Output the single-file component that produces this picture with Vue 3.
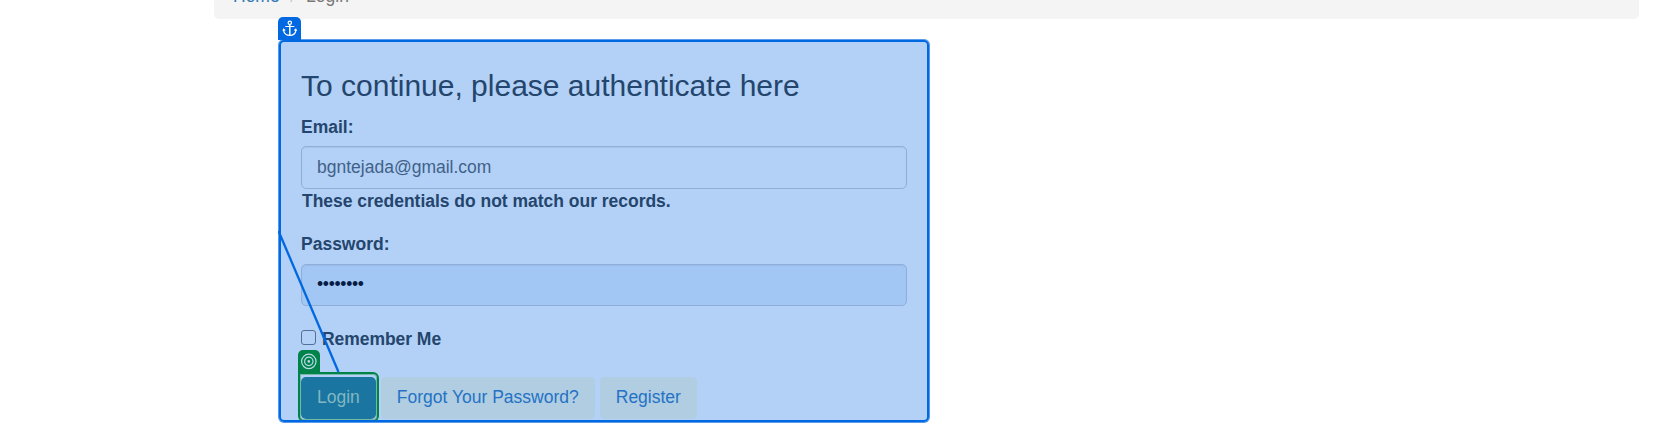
<script setup>
const links = ['Forgot Your Password?', 'Register']
const password = '•'.repeat(8)
</script>

<template>
  <main class="page">
    <nav class="breadcrumb"><a class="home">Home</a><span class="slash">/</span><span>Login</span></nav>
    <section class="panel">
      <h1>To continue, please authenticate here</h1>
      <label class="line">Email:</label>
      <div class="field email">bgntejada@gmail.com</div>
      <strong class="line error">These credentials do not match our records.</strong>
      <label class="line password-label">Password:</label>
      <div class="field password">{{ password }}</div>
      <label class="remember"><span class="checkbox"></span><span>Remember Me</span></label>
      <div class="actions">
        <button class="btn primary">Login</button>
        <button v-for="link in links" :key="link" class="btn">{{ link }}</button>
      </div>
    </section>

    <div class="target-outline"></div>
    <div class="panel-outline"></div>
    <div class="tag anchor-tag">
      <svg width="23" height="23" viewBox="0 0 23 23" fill="none" stroke="#fff" stroke-width="1.2">
        <circle cx="11.8" cy="5.8" r="1.7" />
        <path stroke-width="1.5" d="M11.8 7.5V18" />
        <path d="M7.300 9.500h9M5.500 12.200v1.200c.6 3 3.200 5 6.300 5s5.700-2 6.200-5v-1.200M5 14l.7-1.800 1.500 1.300M18.500 14l-.7-1.800-1.500 1.300" />
      </svg>
    </div>
    <div class="tag target-tag">
      <svg width="22" height="23" viewBox="0 0 22 23" fill="none" stroke="#b9d9ed" stroke-width="1.200">
        <circle cx="10.800" cy="11.400" r="7.200" />
        <circle cx="10.800" cy="11.400" r="4.200" />
        <circle cx="10.800" cy="11.400" r="1.300" fill="#b9d9ed" stroke="none" />
      </svg>
    </div>
    <svg class="connector" width="64" height="144" viewBox="0 0 64 144">
      <path d="M.5 1L60.500 142" stroke="#0068e0" stroke-width="2.300" />
    </svg>
  </main>
</template>

<style>
body { background: #fff; overflow: hidden; }
</style>

<style scoped>
* { box-sizing: border-box; }
.page {
  position: relative;
  width: 1657px;
  height: 442px;
  overflow: hidden;
  background: #fff;
  font-family: "Liberation Sans", Arial, sans-serif;
  font-size: 17.5px;
  line-height: 25px;
  color: #24456d;
}
.breadcrumb {
  display: flex;
  width: 1425px;
  height: 19px;
  margin-left: 214px;
  padding-left: 19px;
  background: #f4f4f4;
  border-radius: 0 0 5px 5px;
  color: #777;
}
.breadcrumb > * { margin-top: -16px; }
.home { color: #337ab7; }
.breadcrumb .slash { margin-right: 11px; margin-left: 10.5px; color: #ccc; }
.panel {
  display: flex;
  flex-direction: column;
  width: 652px;
  height: 384px;
  margin: 20px 0 0 278px;
  padding: 30px 23px 0;
  background: #b3d1f6;
  border-radius: 6px;
}
h1 { margin: 0 0 13px; font-size: 30px; font-weight: 400; line-height: 33px; white-space: nowrap; }
.line { display: block; height: 25px; font-weight: 700; }
.field {
  width: 606px;
  border: 1px solid #91afd6;
  border-radius: 5px;
  padding: 0 15px;
  box-shadow: inset 0 1px 1px rgba(40, 80, 130, .09);
}
.email { height: 43px; margin-top: 6px; line-height: 41px; color: #416189; }
.error { padding-left: 1px; letter-spacing: -.02px; }
.password-label { margin-top: 18px; }
.password { height: 42px; margin-top: 7px; line-height: 39px; letter-spacing: -.3px; background: #a3c7f4; color: #061c45; }
.remember { display: flex; height: 25px; margin-top: 21px; font-weight: 700; letter-spacing: -.05px; }
.checkbox { width: 15px; height: 15px; margin: 3px 6px 0 0; border: 1px solid #526f97; border-radius: 3px; }
.actions { display: flex; gap: 5px; margin-top: 25px; }
.btn {
  height: 42px;
  padding: 0 16px 2px;
  border: 0;
  border-radius: 5px;
  background: #b0cde1;
  color: #2472c5;
  font: inherit;
  line-height: 39px;
  white-space: nowrap;
}
.btn.primary { background: #1a75a0; color: #80b8c3; }
.panel-outline {
  position: absolute;
  left: 279px;
  top: 40px;
  width: 650px;
  height: 382px;
  border: 2px solid #0068e0;
  border-radius: 5px;
  box-shadow: 0 0 0 1px rgba(0, 104, 224, .5);
}
.target-outline {
  position: absolute;
  left: 298px;
  top: 372px;
  width: 81px;
  height: 50px;
  border: 2px solid #008348;
  border-radius: 0 6px 6px 6px;
  box-shadow: inset 0 0 0 1px #75b8a7;
}
.tag { position: absolute; }
.tag svg { display: block; }
.anchor-tag { left: 278px; top: 17px; width: 23px; height: 23px; background: #0068e0; border-radius: 5px 5px 0 0; }
.target-tag { left: 298px; top: 350px; width: 22px; height: 23px; background: #008348; border-radius: 5px 5px 0 0; }
.connector { position: absolute; left: 278px; top: 230px; }
</style>
